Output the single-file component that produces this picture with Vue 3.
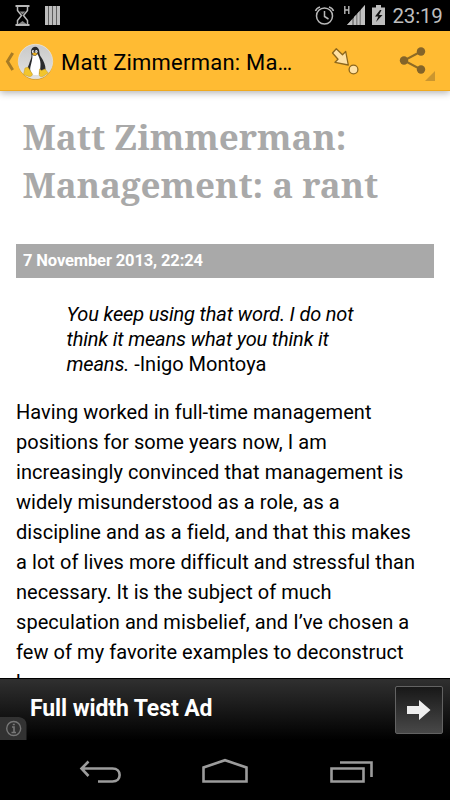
<template>
    <div class="phone">
        <header class="status-bar">
            <svg class="status-left" width="70" height="31" viewBox="0 0 70 31">
                <g fill="none" stroke="#b8b8b8" stroke-width="1.5">
                    <path d="M15.5 6h14M15.5 25h14" stroke-width="2" />
                    <path d="M17.5 6v4.5l4 5-4 5V25M27.5 6v4.5l-4 5 4 5V25" />
                </g>
                <path d="M19.5 11.500h6l-3 3zM18.500 24l4-3 4 3z" fill="#888" />
                <path d="M45 6h3.500v19H45zM49 6h3v19h-3zM52.500 6h3.500v19h-3.500zM56.500 6H60v19h-3.500z" fill="#bdbdbd" />
            </svg>
            <svg class="status-right" width="76" height="31" viewBox="312 0 76 31">
                <g fill="none" stroke="#b8b8b8" stroke-width="1.5">
                    <circle cx="324.5" cy="16" r="8" />
                    <path d="M324.5 11v5.5l4 2.500M315.500 11q1-3 4.500-4M333.500 11q-1-3-4.500-4" />
                </g>
                <path d="M344.800 6v8M348.800 6v8M344.800 10h4" fill="none" stroke="#b8b8b8" stroke-width="1.400" />
                <path d="M347 25l18-20v20z" fill="#858585" />
                <path d="M347 25l5-5.600V25zM354 25v-8l2-2v10zM357.500 25V13.500l2-2.500v14zM361 25V9.500L365 5v20z" fill="#c0c0c0" />
                <path d="M376 5h5v2.500h4V25h-13V7.500h4z" fill="#bdbdbd" />
                <path d="M380 10l-5 6.500h3.300L376 22l6.500-7H379l2.500-5z" fill="#111" />
            </svg>
            <span class="clock">23:19</span>
        </header>

        <div class="action-bar">
            <svg class="app-icon" width="54" height="60" viewBox="0 31 54 60">
                <defs>
                    <linearGradient id="disc" x1="0" y1="0" x2="0" y2="1">
                        <stop offset="0" stop-color="#c9c9c9" />
                        <stop offset="1" stop-color="#e2e2e2" />
                    </linearGradient>
                </defs>
                <path d="M12.700 53L7.500 61.500l5.200 8.500" fill="none" stroke="#a77b25" stroke-width="3" />
                <circle cx="35.500" cy="62.300" r="17.400" fill="#9b7b3a" opacity=".6" />
                <circle cx="35.500" cy="61.500" r="17.200" fill="url(#disc)" stroke="#eeeae0" stroke-width=".7" />
                <path d="M31 52c0-3 1.500-5.200 4-5.200s4.300 2 4.300 5c0 4 2 5 3.700 8.500 2 4 3.300 8 2 11.500-2 3-14 3-17.500 1-1-3 .5-6 1.500-8.500 1.200-4 2.500-6 2.500-8.500z" fill="#292a2d" />
                <path d="M32.500 54.500c1 2 4 1.500 5-.5 1.500 3 3 6 3 10 0 4-.5 8-2 11h-5c-2.500-2-4-4-3-8.500s2-7 2-12z" fill="#fff" />
                <ellipse cx="33" cy="51.500" rx="1.100" ry="1.500" fill="#fff" />
                <ellipse cx="36.300" cy="51.500" rx="1.300" ry="1.600" fill="#fff" />
                <circle cx="33.300" cy="51.800" r=".5" fill="#111" />
                <circle cx="36" cy="51.800" r=".5" fill="#111" />
                <path d="M31.800 53.800l2.700-1.300 3.300 1.300-3 2z" fill="#e9ae22" />
                <path d="M25 68l3-.8 4.500 7c-.5 2.500-3 2.800-5 1.700l-4-1.300zM39.500 69l2 1.500 3.500-1.500 3.200 4-5 3.300c-2 1-4 .5-4-2z" fill="#f2c52d" stroke="#c79a24" stroke-width=".5" />
            </svg>
            <span class="action-title">Matt Zimmerman: Ma…</span>
            <svg class="action-icons" width="130" height="60" viewBox="320 31 130 60">
                <g fill="#ffe1a4" stroke="#8c661c" stroke-width="1.300" stroke-linejoin="round">
                    <path d="M332.500 53l3.800-4.300 6.200 6 3.200-3.200 2.600 13.500-13.300-2.700 3-3z" />
                    <circle cx="353.500" cy="69.500" r="4.400" />
                </g>
                <path d="M421 51.500l-17 9 17 9" fill="none" stroke="#8d6a25" stroke-width="2" />
                <g fill="#846429">
                    <circle cx="421" cy="51.500" r="4.200" />
                    <circle cx="404" cy="60.500" r="4.200" />
                    <circle cx="421" cy="69.500" r="4.200" />
                </g>
                <path d="M435 71v10h-10z" fill="#cb962f" />
            </svg>
        </div>

        <main class="article">
            <h1>Matt Zimmerman:<br>Management: a rant</h1>
            <div class="date">7 November 2013, 22:24</div>
            <blockquote>
                <em>You keep using that word. I do not<br>think it means what you think it<br>means.</em> -Inigo Montoya
            </blockquote>
            <p>
                <template v-for="line in lines" :key="line">{{ line }}<br></template>
            </p>
        </main>

        <aside class="ad">
            <span class="ad-text">Full width Test Ad</span>
            <button class="ad-button" aria-label="Open ad">
                <svg width="24" height="20" viewBox="0 0 24 20">
                    <path d="M0 6h12V0l11.500 10L12 20v-6H0z" fill="#eee" />
                </svg>
            </button>
            <svg class="ad-info" width="27" height="23" viewBox="0 0 27 23">
                <path d="M0 0h19q7.500 1 7.500 8v15H0z" fill="#323232" />
                <circle cx="13.700" cy="11.500" r="7" fill="none" stroke="#777" stroke-width="1.400" />
                <path d="M12 10h2v5.500M11.500 15.500h4.500M12.800 7.500h2" fill="none" stroke="#777" stroke-width="1.600" />
            </svg>
        </aside>

        <nav class="nav-bar">
            <svg width="450" height="60" viewBox="0 740 450 60">
                <g fill="none" stroke="#9c9c9c" stroke-width="2.600">
                    <path d="M98 781.500h14.500c9.500 0 9.500-13 0-13H82M88.500 761.500l-7 7 7 7.500" />
                    <path d="M203.500 781.500v-14l21.500-7.300 21.500 7.300v14z" />
                    <path d="M331.500 768.500h32v13h-32zM340 762.500h31.500V777" />
                </g>
            </svg>
        </nav>
    </div>
</template>

<script setup>
const lines = [
    'Having worked in full-time management',
    'positions for some years now, I am',
    'increasingly convinced that management is',
    'widely misunderstood as a role, as a',
    'discipline and as a field, and that this makes',
    'a lot of lives more difficult and stressful than',
    'necessary. It is the subject of much',
    'speculation and misbelief, and I’ve chosen a',
    'few of my favorite examples to deconstruct',
    'here.'
]
</script>

<style>
body {
    margin: 0;
    background: #000;
}
</style>

<style scoped>
.phone {
    display: flex;
    flex-direction: column;
    width: 450px;
    height: 800px;
    overflow: hidden;
    background: #fff;
    color: #000;
    font-family: Roboto, sans-serif;
}

svg {
    display: block;
    flex: none;
}

.status-bar {
    display: flex;
    flex: none;
    height: 31px;
    background: #000;
}
.status-right {
    margin-left: 242px;
}
.clock {
    margin-left: 4.5px;
    color: #bebebe;
    font-size: 20.5px;
    letter-spacing: -.2px;
    line-height: 33px;
    white-space: nowrap;
}

.action-bar {
    display: flex;
    flex: none;
    height: 60px;
    box-sizing: border-box;
    background: #ffbb33;
    box-shadow: inset 0 -1px 0 #efa91f, 0 2px 7px rgba(0, 0, 0, .3);
    z-index: 1;
}
.action-title {
    width: 259px;
    margin-left: 7px;
    font-size: 22px;
    letter-spacing: .22px;
    line-height: 63px;
    white-space: nowrap;
}

.article {
    flex: 1;
    min-height: 0;
    overflow: hidden;
    padding: 0 16px;
}
h1 {
    margin: 0;
    padding: 22px 0 0 6.500px;
    color: #a9a9a9;
    font-family: "Noto Serif", "Droid Serif", "DejaVu Serif", serif;
    font-size: 35px;
    font-weight: bold;
    letter-spacing: -.03px;
    line-height: 47.5px;
    white-space: nowrap;
}
.date {
    height: 34px;
    margin-top: 36px;
    padding-left: 7px;
    background: #a9a9a9;
    color: #fff;
    font-size: 16.5px;
    font-weight: bold;
    letter-spacing: -.13px;
    line-height: 34px;
}
blockquote {
    margin: 24px 0 0 50.5px;
    font-size: 20px;
    line-height: 25px;
    white-space: nowrap;
}
blockquote em {
    letter-spacing: -.17px;
}
p {
    margin: 20px 0 0;
    font-size: 20px;
    letter-spacing: .06px;
    line-height: 30px;
    white-space: nowrap;
}

.ad {
    position: relative;
    display: flex;
    flex: none;
    justify-content: space-between;
    height: 62px;
    box-sizing: border-box;
    padding: 7px 7px 0 30px;
    border-top: 1px solid #000;
    background: linear-gradient(#303030, #000);
}
.ad-text {
    color: #fff;
    font-size: 23px;
    font-weight: bold;
    letter-spacing: -.1px;
    line-height: 46px;
}
.ad-button {
    display: flex;
    align-items: center;
    justify-content: center;
    width: 48px;
    height: 48px;
    box-sizing: border-box;
    padding: 0;
    border: 1px solid #636363;
    border-radius: 2px;
    background: linear-gradient(#181818, #484848);
}
.ad-info {
    position: absolute;
    bottom: 0;
    left: 0;
}

.nav-bar {
    flex: none;
    height: 60px;
    background: #000;
}
</style>
